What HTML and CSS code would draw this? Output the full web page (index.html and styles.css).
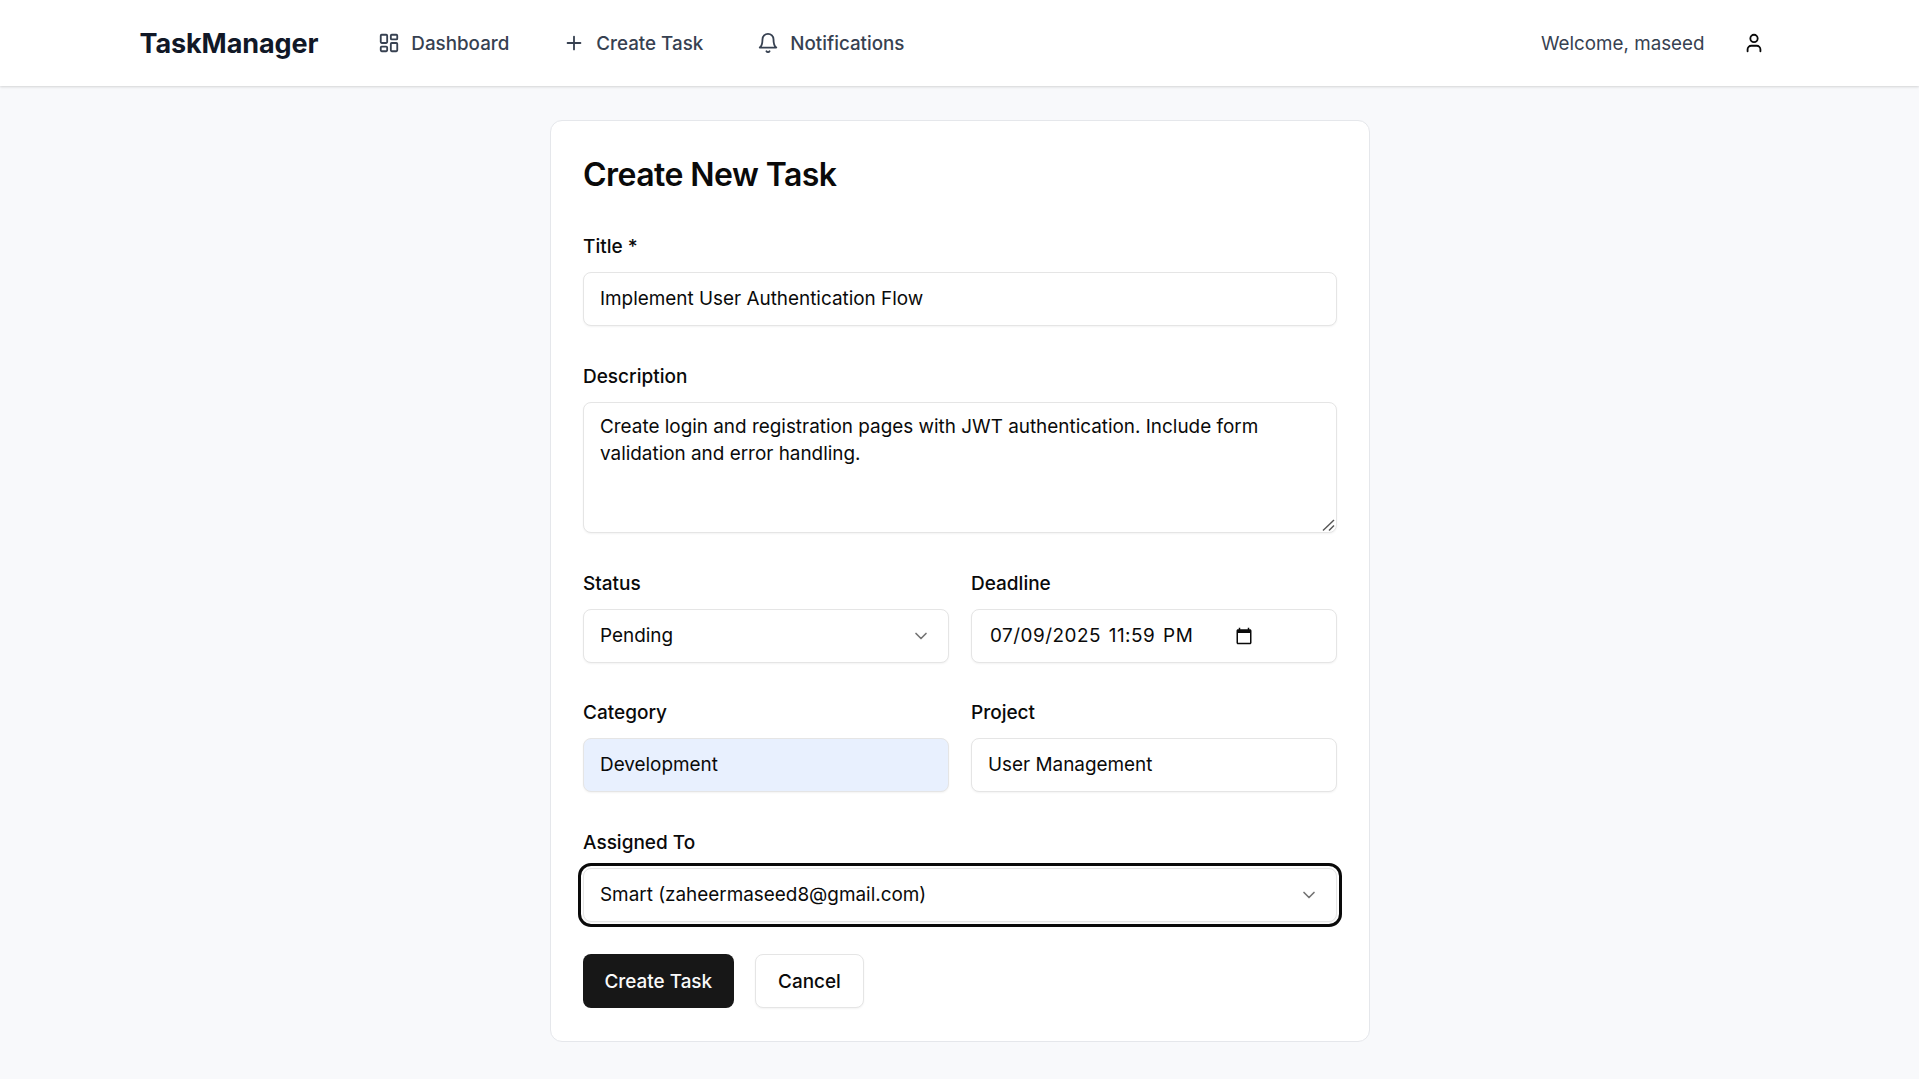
FILE: index.html
```html
<!DOCTYPE html>
<html lang="en">
<head>
<meta charset="utf-8">
<title>TaskManager</title>
<link rel="stylesheet" href="styles.css">
</head>
<body>
<header class="navbar">
  <div class="nav-inner">
    <div class="nav-left">
      <a class="brand">TaskManager</a>
      <nav class="nav-links">
        <a class="nav-link"><svg class="icon" viewBox="0 0 24 24"><rect x="3" y="3" width="7" height="9" rx="1"/><rect x="14" y="3" width="7" height="5" rx="1"/><rect x="14" y="12" width="7" height="9" rx="1"/><rect x="3" y="16" width="7" height="5" rx="1"/></svg>Dashboard</a>
        <a class="nav-link"><svg class="icon" viewBox="0 0 24 24"><path d="M5 12h14"/><path d="M12 5v14"/></svg>Create Task</a>
        <a class="nav-link"><svg class="icon" viewBox="0 0 24 24"><path d="M6 8a6 6 0 0 1 12 0c0 7 3 9 3 9H3s3-2 3-9"/><path d="M10.3 21a1.94 1.94 0 0 0 3.4 0"/></svg>Notifications</a>
      </nav>
    </div>
    <div class="nav-right">
      <span class="welcome">Welcome, maseed</span>
      <svg class="icon user-icon" viewBox="0 0 24 24"><path d="M19 21v-2a4 4 0 0 0-4-4H9a4 4 0 0 0-4 4v2"/><circle cx="12" cy="7" r="4"/></svg>
    </div>
  </div>
</header>
<main class="page">
  <form class="card">
    <h1 class="card-title">Create New Task</h1>
    <div class="fields">
      <div class="field">
        <label class="label">Title *</label>
        <input class="control" type="text" value="Implement User Authentication Flow">
      </div>
      <div class="field">
        <label class="label">Description</label>
        <div class="control-wrap">
          <textarea class="control textarea" rows="4">Create login and registration pages with JWT authentication. Include form validation and error handling.</textarea>
          <svg class="resize-grip" viewBox="0 0 14 14"><path d="M2 11.5 13 1"/><path d="M8 11.5l5-5"/></svg>
        </div>
      </div>
      <div class="row">
        <div class="field">
          <label class="label">Status</label>
          <div class="control-wrap">
            <select class="control select"><option>Pending</option><option>In Progress</option><option>Completed</option></select>
            <svg class="chevron" viewBox="0 0 24 24"><path d="m6 9 6 6 6-6"/></svg>
          </div>
        </div>
        <div class="field">
          <label class="label">Deadline</label>
          <div class="control-wrap">
            <input class="control date" type="text" value="07/09/2025 11:59 PM">
            <svg class="calendar" viewBox="0 0 24 24"><path d="M20 3h-1V1h-2v2H7V1H5v2H4c-1.1 0-2 .9-2 2v16c0 1.1.9 2 2 2h16c1.1 0 2-.9 2-2V5c0-1.1-.9-2-2-2zm0 18H4V8h16v13z"/></svg>
          </div>
        </div>
      </div>
      <div class="row">
        <div class="field">
          <label class="label">Category</label>
          <input class="control autofilled" type="text" value="Development">
        </div>
        <div class="field">
          <label class="label">Project</label>
          <input class="control" type="text" value="User Management">
        </div>
      </div>
      <div class="field">
        <label class="label">Assigned To</label>
        <div class="control-wrap">
          <select class="control select focused"><option>Smart (zaheermaseed8@gmail.com)</option></select>
          <svg class="chevron" viewBox="0 0 24 24"><path d="m6 9 6 6 6-6"/></svg>
        </div>
      </div>
    </div>
    <div class="actions">
      <button class="btn btn-primary" type="button">Create Task</button>
      <button class="btn btn-outline" type="button">Cancel</button>
    </div>
  </form>
</main>
</body>
</html>
```

FILE: styles.css
```css
* { box-sizing: border-box; }
html, body { margin: 0; padding: 0; }
body {
  min-height: 1079px;
  background: #f8f9fb;
  color: #0a0a0a;
  font-family: Inter, "Liberation Sans", sans-serif;
  font-size: 19px;
  overflow: hidden;
}
.navbar {
  height: 86px;
  background: #fff;
  box-shadow: 0 1px 3px rgba(0,0,0,.1), 0 1px 2px rgba(0,0,0,.06);
}
.nav-inner {
  width: 1640px;
  height: 100%;
  margin: 0 auto;
  display: flex;
  align-items: center;
  justify-content: space-between;
}
.nav-left { display: flex; align-items: center; gap: 60px; }
.brand { font-size: 27px; font-weight: 700; color: #111827; letter-spacing: -0.1px; }
.nav-links { display: flex; align-items: center; gap: 54px; }
.nav-link {
  display: flex;
  align-items: center;
  gap: 11px;
  font-size: 18.8px;
  font-weight: 500;
  color: #374151;
}
.icon {
  width: 22px;
  height: 22px;
  fill: none;
  stroke: currentColor;
  stroke-width: 2;
  stroke-linecap: round;
  stroke-linejoin: round;
  flex: none;
}
.nav-right { display: flex; align-items: center; gap: 38px; }
.welcome { color: #374151; font-size: 18.8px; }
.user-icon { color: #0a0a0a; margin-right: 15px; }
.page { display: flex; justify-content: center; padding: 34px 0 0 1px; }
.card {
  width: 820px;
  padding: 34px 32px 33px;
  background: #fff;
  border: 1px solid #e5e7eb;
  border-radius: 12px;
  display: flex;
  flex-direction: column;
}
.card-title {
  margin: 0 0 43px;
  font-size: 32px;
  font-weight: 600;
  line-height: 40px;
  letter-spacing: -0.55px;
}
.fields { display: flex; flex-direction: column; gap: 41.8px; }
.field { display: flex; flex-direction: column; gap: 16px; min-width: 0; flex: 1; }
.label { font-size: 19px; font-weight: 500; line-height: 18px; }
.control {
  display: block;
  width: 100%;
  height: 54px;
  padding: 0 16px 1px;
  background: #fff;
  border: 1px solid #e5e5e5;
  border-radius: 8px;
  box-shadow: 0 1px 2px rgba(0,0,0,.05);
  color: #0a0a0a;
  font: inherit;
  font-size: 18.9px;
  outline: none;
}
.textarea { height: 131px; padding: 10px 16px; line-height: 27px; resize: none; }
.row { display: flex; gap: 22px; }
.control-wrap { position: relative; }
.select { appearance: none; }
.date { padding-left: 18px; letter-spacing: 0.5px; word-spacing: 2px; }
.chevron {
  position: absolute;
  top: 17px;
  right: 18px;
  width: 20px;
  height: 20px;
  fill: none;
  stroke: #737373;
  stroke-width: 2;
  stroke-linecap: round;
  stroke-linejoin: round;
  pointer-events: none;
}
.calendar {
  position: absolute;
  top: 18px;
  right: 84px;
  width: 18px;
  height: 18px;
  fill: #0a0a0a;
}
.resize-grip {
  position: absolute;
  right: 2px;
  bottom: 0;
  width: 14px;
  height: 14px;
  fill: none;
  stroke: #555;
  stroke-width: 1.4;
  pointer-events: none;
}
.autofilled { background: #e8f0fe; }
.focused { outline: 3px solid #0a0a0a; outline-offset: 2px; }
.actions { display: flex; gap: 21px; margin-top: 32px; }
.btn {
  height: 54px;
  padding: 0 21.5px;
  border-radius: 8px;
  font: inherit;
  font-size: 18.9px;
  font-weight: 500;
}
.btn-primary { background: #171717; border: 0; color: #fafafa; }
.btn-outline { padding: 0 22.5px; background: #fff; border: 1px solid #e5e5e5; color: #0a0a0a; box-shadow: 0 1px 2px rgba(0,0,0,.05); }
```
